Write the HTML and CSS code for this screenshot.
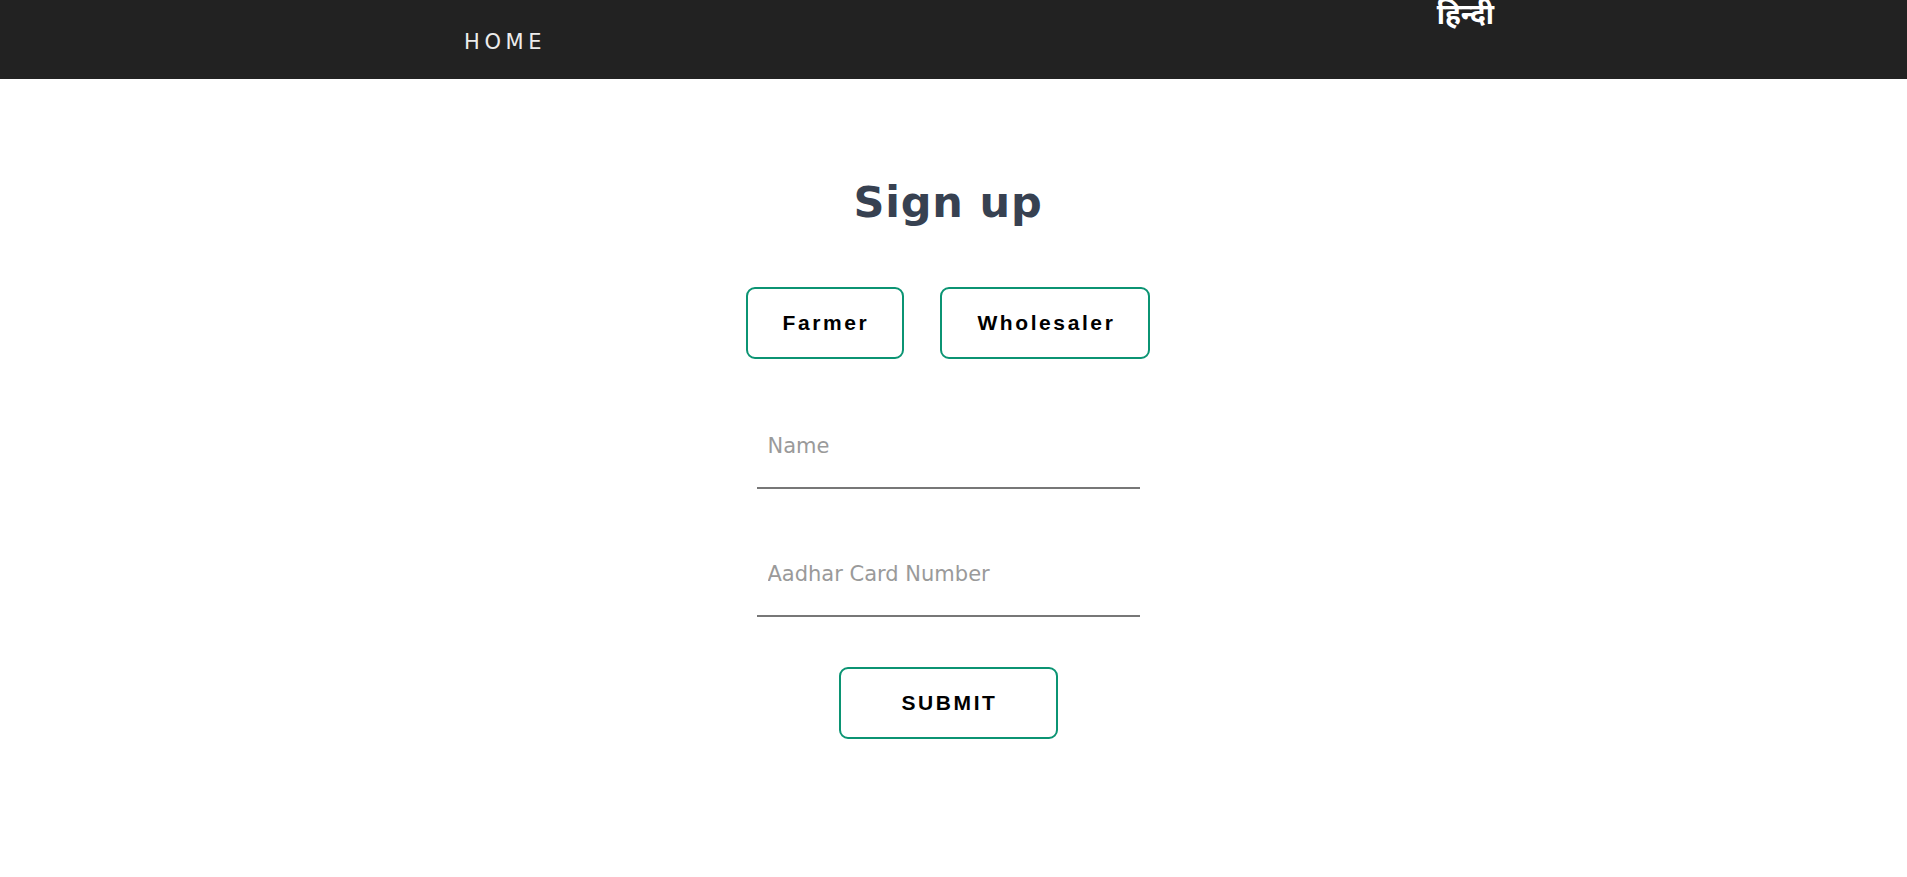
FILE: index.html
```html
<!DOCTYPE html>
<html lang="en">
<head>
<meta charset="utf-8">
<title>Sign up</title>
<link rel="stylesheet" href="styles.css">
</head>
<body>
<nav class="navbar">
  <a class="nav-home" href="#">HOME</a>
  <a class="nav-lang" href="#" lang="hi">हिन्दी</a>
</nav>
<main class="signup">
  <h1 class="signup-title">Sign up</h1>
  <div class="role-row">
    <button class="btn btn-role" type="button">Farmer</button>
    <button class="btn btn-role" type="button">Wholesaler</button>
  </div>
  <form class="signup-form">
    <input class="field" type="text" placeholder="Name">
    <input class="field" type="text" placeholder="Aadhar Card Number">
    <button class="btn btn-submit" type="submit">SUBMIT</button>
  </form>
</main>
</body>
</html>
```

FILE: styles.css
```css
* { box-sizing: border-box; }

html, body {
  margin: 0;
  padding: 0;
  background: #ffffff;
}

body {
  font-family: "DejaVu Sans", "Open Sans", sans-serif;
}

.navbar {
  height: 79px;
  background: #222222;
  display: flex;
  align-items: center;
  justify-content: space-between;
  padding: 0 413px 0 464px;
  overflow: hidden;
}

.nav-home {
  color: #ececec;
  text-decoration: none;
  font-family: "DejaVu Sans", sans-serif;
  font-weight: 400;
  font-size: 21px;
  letter-spacing: 4.6px;
  margin-top: 4px;
}

.nav-lang {
  align-self: flex-start;
  color: #ffffff;
  text-decoration: none;
  font-family: "Noto Sans Devanagari", "Lohit Devanagari", "FreeSans", "Noto Sans", sans-serif;
  font-weight: 700;
  font-size: 28px;
  line-height: 34px;
  margin-top: 0;
}

.signup {
  display: flex;
  flex-direction: column;
  align-items: center;
  padding-top: 97px;
  margin-right: 11px;
}

.signup-title {
  margin: 0;
  font-family: "DejaVu Sans", sans-serif;
  font-weight: 700;
  font-size: 43px;
  line-height: 52px;
  letter-spacing: 0.8px;
  color: #374151;
}

.role-row {
  display: flex;
  gap: 36px;
  margin-top: 59px;
}

.btn {
  height: 72px;
  background: #ffffff;
  border: 2px solid #0b9473;
  border-radius: 9px;
  font-family: "Liberation Sans", Arial, sans-serif;
  font-weight: 700;
  font-size: 21px;
  letter-spacing: 2.6px;
  color: #000000;
  cursor: pointer;
}

.btn-role {
  padding: 0 33px 0 35px;
}

.signup-form {
  display: flex;
  flex-direction: column;
  align-items: center;
  gap: 62px;
  margin-top: 64px;
}

.field {
  display: block;
  width: 383px;
  padding: 10px 10px 28px 11px;
  line-height: 26px;
  border: none;
  border-bottom: 2px solid #777777;
  outline: none;
  font-family: "DejaVu Sans", sans-serif;
  font-size: 21px;
  color: #333333;
  background: transparent;
}

.field::placeholder {
  color: #9a9a9a;
  opacity: 1;
}

.btn-submit {
  width: 219px;
  padding: 0;
  margin-top: -12px;
  padding-left: 3px;
}
```
